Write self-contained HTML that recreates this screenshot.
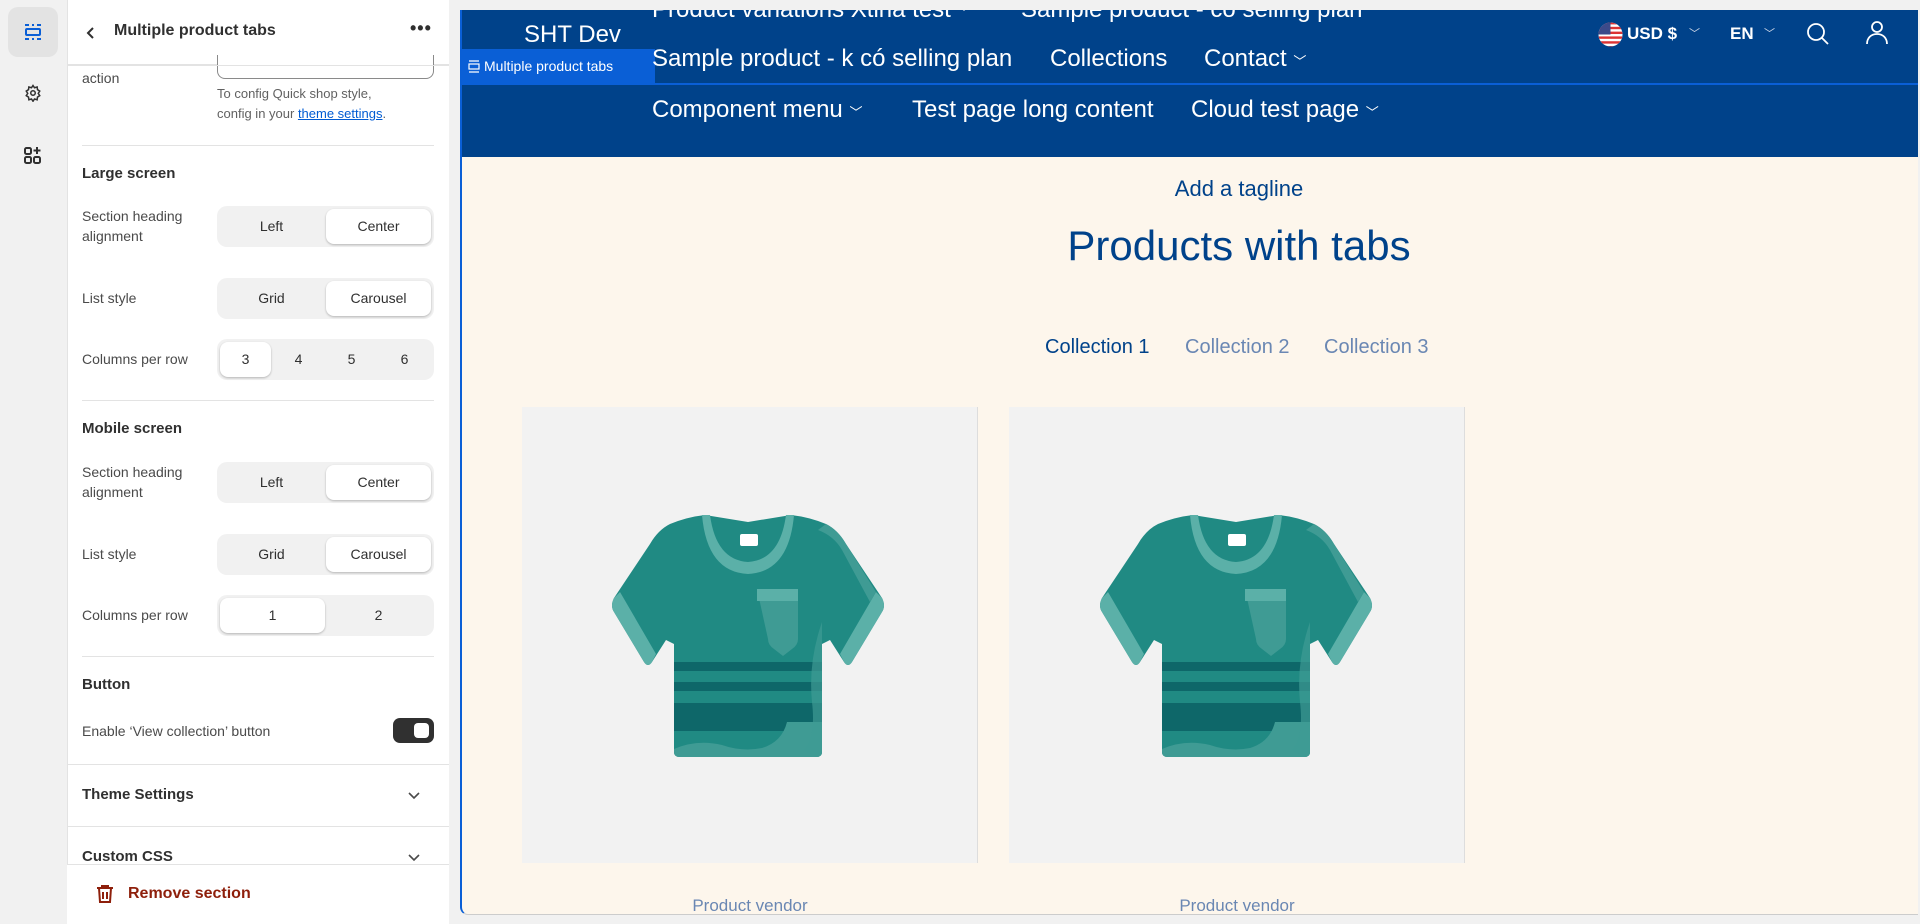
<!DOCTYPE html>
<html><head><meta charset="utf-8"><style>
*{box-sizing:border-box;margin:0;padding:0}
body{width:1920px;height:924px;background:#f1f1f1;font-family:"Liberation Sans",sans-serif;position:relative;overflow:hidden;color:#303030}
.a{position:absolute;white-space:nowrap}
.rail{position:absolute;left:0;top:0;width:67px;height:924px;background:#f1f1f1}
.panel{position:absolute;left:67px;top:0;width:382px;height:924px;background:#fff;border-left:1px solid #e3e3e3}
.lbl{font-size:14px;color:#4a4a4a;line-height:20px}
.h{font-size:15px;font-weight:bold;color:#303030}
.seg{position:absolute;left:217px;width:217px;height:41px;background:#f1f1f1;border-radius:10px}
.seg div{position:absolute;top:3px;height:35px;line-height:35px;text-align:center;font-size:14px;color:#303030}
.seg .on{background:#fff;border-radius:8px;box-shadow:0 1px 2px rgba(0,0,0,.25)}
.div{position:absolute;left:82px;width:352px;height:1px;background:#e3e3e3}
.nav{color:#fff;font-size:24px}
.card{position:absolute;top:407px;width:456px;height:456px;background:#f2f2f2;border-right:1px solid #ddd}
</style></head><body>
<div class="rail">
 <div class="a" style="left:8px;top:7px;width:50px;height:50px;background:#e3e3e3;border-radius:10px"></div>
 <svg class="a" style="left:24px;top:23px" width="18" height="18" viewBox="0 0 18 18" fill="none" stroke="#0a5fd6" stroke-width="2"><rect x="2" y="6" width="14" height="6" rx="1"/><path d="M2 3V2h3M8 2h2M13 2h3v1M2 15v1h3M8 16h2M13 16h3v-1"/></svg>
 <svg class="a" style="left:24px;top:84px" width="18" height="18" viewBox="0 0 24 24" fill="none" stroke="#303030" stroke-width="2"><circle cx="12" cy="12" r="3"/><path d="M12 2l2 3 3.5-1 .5 3.5 3 2-2 3 2 3-3 2-.5 3.5-3.5-1-2 3-2-3-3.5 1-.5-3.5-3-2 2-3-2-3 3-2 .5-3.5 3.5 1z"/></svg>
 <svg class="a" style="left:24px;top:146px" width="18" height="18" viewBox="0 0 18 18" fill="none" stroke="#303030" stroke-width="2"><rect x="1" y="2" width="6" height="6" rx="1.5"/><rect x="1" y="11" width="6" height="6" rx="1.5"/><rect x="10" y="11" width="6" height="6" rx="1.5"/><path d="M13 1v7M9.5 4.5h7"/></svg>
</div>
<div class="panel">
 <div class="a" style="left:0;top:0;width:381px;height:65px;border-bottom:1px solid #e3e3e3;background:#fff"></div>
 <svg class="a" style="left:17px;top:26px" width="12" height="14" viewBox="0 0 12 14" fill="none" stroke="#303030" stroke-width="2"><path d="M8 2L3 7l5 5"/></svg>
 <div class="a" style="left:46px;top:22px;font-size:16px;font-weight:bold;color:#303030">Multiple product tabs</div>
 <div class="a" style="left:342px;top:18px;font-size:18px;font-weight:bold;letter-spacing:1px">•••</div>
</div>
<div class="a" style="left:217px;top:55px;width:217px;height:24px;border:1px solid #8a8a8a;border-top:none;border-radius:0 0 8px 8px;background:#fff"></div>
<div class="a" style="left:67px;top:65px;width:382px;height:1px;background:#e3e3e3"></div>
<div class="a lbl" style="left:82px;top:68px">action</div>
<div class="a" style="left:217px;top:84px;font-size:13px;color:#616161;line-height:20px">To config Quick shop style,<br>config in your <span style="color:#005bd3;text-decoration:underline">theme settings</span>.</div>
<div class="div" style="top:145px"></div>
<div class="a h" style="left:82px;top:165px">Large screen</div>
<div class="a lbl" style="left:82px;top:206px">Section heading<br>alignment</div>
<div class="seg" style="top:206px"><div style="left:0;width:109px">Left</div><div class="on" style="left:109px;width:105px">Center</div></div>
<div class="a lbl" style="left:82px;top:288px">List style</div>
<div class="seg" style="top:278px"><div style="left:0;width:109px">Grid</div><div class="on" style="left:109px;width:105px">Carousel</div></div>
<div class="a lbl" style="left:82px;top:349px">Columns per row</div>
<div class="seg" style="top:339px"><div class="on" style="left:3px;width:51px">3</div><div style="left:56px;width:51px">4</div><div style="left:109px;width:51px">5</div><div style="left:162px;width:51px">6</div></div>
<div class="div" style="top:400px"></div>
<div class="a h" style="left:82px;top:420px">Mobile screen</div>
<div class="a lbl" style="left:82px;top:462px">Section heading<br>alignment</div>
<div class="seg" style="top:462px"><div style="left:0;width:109px">Left</div><div class="on" style="left:109px;width:105px">Center</div></div>
<div class="a lbl" style="left:82px;top:544px">List style</div>
<div class="seg" style="top:534px"><div style="left:0;width:109px">Grid</div><div class="on" style="left:109px;width:105px">Carousel</div></div>
<div class="a lbl" style="left:82px;top:605px">Columns per row</div>
<div class="seg" style="top:595px"><div class="on" style="left:3px;width:105px">1</div><div style="left:109px;width:105px">2</div></div>
<div class="div" style="top:656px"></div>
<div class="a h" style="left:82px;top:676px">Button</div>
<div class="a lbl" style="left:82px;top:721px">Enable ‘View collection’ button</div>
<div class="a" style="left:393px;top:718px;width:41px;height:25px;background:#303030;border-radius:7px"><div class="a" style="left:21px;top:5px;width:15px;height:15px;background:#fff;border-radius:4px"></div></div>
<div class="a" style="left:67px;top:764px;width:382px;height:1px;background:#e3e3e3"></div>
<div class="a h" style="left:82px;top:786px">Theme Settings</div>
<svg class="a" style="left:407px;top:791px" width="14" height="10" viewBox="0 0 14 10" fill="none" stroke="#4a4a4a" stroke-width="1.6"><path d="M2 2l5 5 5-5"/></svg>
<div class="a" style="left:67px;top:826px;width:382px;height:1px;background:#e3e3e3"></div>
<div class="a h" style="left:82px;top:848px">Custom CSS</div>
<svg class="a" style="left:407px;top:853px" width="14" height="10" viewBox="0 0 14 10" fill="none" stroke="#4a4a4a" stroke-width="1.6"><path d="M2 2l5 5 5-5"/></svg>
<div class="a" style="left:67px;top:864px;width:382px;height:60px;background:#fff;border-top:1px solid #e3e3e3"></div>
<svg class="a" style="left:96px;top:884px" width="18" height="20" viewBox="0 0 18 20" fill="none" stroke="#8e1f0b" stroke-width="2"><path d="M1 4h16M6 4V2h6v2M3 4l1 14h10l1-14M7 8v7M11 8v7"/></svg>
<div class="a" style="left:128px;top:885px;font-size:16px;font-weight:bold;color:#8e1f0b">Remove section</div>

<!-- preview -->
<div class="a" style="left:460px;top:10px;width:1458px;height:905px;background:#fdf6ec;border-left:2px solid #0a5fd6;border-bottom:1px solid #ccc;border-radius:0 0 0 8px;overflow:hidden">
 <div class="a" style="left:0;top:0;width:1458px;height:147px;background:#00428a"></div>
 <div class="a" style="left:0;top:73px;width:1458px;height:2px;background:#0a5fd6"></div>
 <div class="a" style="left:0;top:39px;width:193px;height:35px;background:#0a5fd6"></div>
 <svg class="a" style="left:6px;top:50px" width="12" height="13" viewBox="0 0 12 13" fill="none" stroke="#fff" stroke-width="1.2"><rect x="1" y="4" width="10" height="5"/><path d="M1 1h10M1 12h10"/></svg>
 <div class="a" style="left:22px;top:48px;font-size:14px;color:#fff">Multiple product tabs</div>
 <div class="a" style="left:62px;top:11px;font-size:24px;color:#fff">SHT Dev</div>
 <div class="a nav" style="left:190px;top:-14px">Product variations Xtina test <span style="font-size:13px">﹀</span></div>
 <div class="a nav" style="left:559px;top:-14px">Sample product - có selling plan</div>
 <div class="a nav" style="left:190px;top:35px">Sample product - k có selling plan</div>
 <div class="a nav" style="left:588px;top:35px">Collections</div>
 <div class="a nav" style="left:742px;top:35px">Contact <span style="font-size:13px">﹀</span></div>
 <div class="a nav" style="left:190px;top:86px">Component menu <span style="font-size:13px">﹀</span></div>
 <div class="a nav" style="left:450px;top:86px">Test page long content</div>
 <div class="a nav" style="left:729px;top:86px">Cloud test page <span style="font-size:13px">﹀</span></div>
 <svg class="a" style="left:1136px;top:12px" width="25" height="25" viewBox="0 0 26 26"><clipPath id="c"><circle cx="13" cy="13" r="12.5"/></clipPath><g clip-path="url(#c)"><rect width="26" height="26" fill="#fff"/><g fill="#d33"><rect y="0" width="26" height="2.5"/><rect y="5" width="26" height="2.5"/><rect y="10" width="26" height="2.5"/><rect y="15" width="26" height="2.5"/><rect y="20" width="26" height="2.5"/><rect y="25" width="26" height="2"/></g><rect width="13" height="13" fill="#3c4a8a"/></g></svg>
 <div class="a" style="left:1165px;top:14px;font-size:17px;font-weight:bold;color:#fff">USD $</div>
 <div class="a" style="left:1227px;top:15px;font-size:11px;color:#cfd8e8">﹀</div>
 <div class="a" style="left:1268px;top:14px;font-size:17px;font-weight:bold;color:#fff">EN</div>
 <div class="a" style="left:1302px;top:15px;font-size:11px;color:#cfd8e8">﹀</div>
 <svg class="a" style="left:1344px;top:12px" width="24" height="24" viewBox="0 0 24 24" fill="none" stroke="#fff" stroke-width="1.8"><circle cx="10" cy="10" r="8"/><path d="M16 16l6 6"/></svg>
 <svg class="a" style="left:1404px;top:11px" width="22" height="24" viewBox="0 0 22 24" fill="none" stroke="#fff" stroke-width="1.8"><circle cx="11" cy="6" r="5"/><path d="M1 23c0-6 4-10 10-10s10 4 10 10"/></svg>
 <div class="a" style="left:0;top:166px;width:1554px;text-align:center;font-size:22px;color:#00428a">Add a tagline</div>
 <div class="a" style="left:0;top:212px;width:1554px;text-align:center;font-size:42px;color:#00428a">Products with tabs</div>
 <div class="a" style="left:583px;top:326px;font-size:20px;color:#00428a">Collection 1</div>
 <div class="a" style="left:723px;top:326px;font-size:20px;color:#6a87b3">Collection 2</div>
 <div class="a" style="left:862px;top:326px;font-size:20px;color:#6a87b3">Collection 3</div>
</div>
<div class="card" style="left:522px"></div>
<div class="card" style="left:1009px"></div>
<svg width="0" height="0" style="position:absolute"><defs><g id="tee">
 <path d="M58 12 Q75 5 93 3 L136 10 L179 3 Q197 5 214 12 Q226 18 234 32 L270 86 Q274 94 270 100 L240 150 Q236 156 232 150 L218 128 L210 132 L210 240 Q210 245 204 245 L68 245 Q62 245 62 240 L62 132 L54 128 L40 150 Q36 156 32 150 L2 100 Q-2 94 2 86 L38 32 Q46 18 58 12 Z" fill="#208a83"/>
 <path d="M2 86 L8 80 L44 142 L40 150 Q36 156 32 150 L2 100 Q-2 94 2 86 Z M270 86 L264 80 L228 142 L232 150 Q236 156 240 150 L270 100 Q274 94 270 86 Z" fill="#5bb0a8"/>
 <path d="M214 12 Q226 18 234 32 L264 80 L258 90 L230 38 Q222 24 206 18 Z" fill="#3f9b94"/>
 <path d="M90 3 Q95 60 136 62 Q177 60 182 3 L174 3 Q168 48 136 50 Q104 48 98 3 Z" fill="#5bb0a8"/>
 <rect x="128" y="22" width="18" height="12" rx="2" fill="#fff"/>
 <path d="M145 77 h41 v50 q0 6 -6 10 l-9 7 l-9 -7 q-6 -4 -6 -10 z" fill="#3f9b94"/>
 <rect x="145" y="77" width="41" height="12" fill="#5bb0a8"/>
 <rect x="62" y="150" width="148" height="9" fill="#0e6769"/>
 <rect x="62" y="170" width="148" height="9" fill="#0e6769"/>
 <rect x="62" y="191" width="148" height="28" fill="#0e6769"/>
 <path d="M62 237 Q85 227 110 233 Q130 240 150 236 Q170 230 175 210 L210 210 L210 240 Q210 245 204 245 L68 245 Q62 245 62 240 Z" fill="#3f9b94"/>
 <path d="M210 110 Q196 150 200 190 Q204 225 192 238 L204 245 Q210 245 210 240 Z" fill="#3f9b94" opacity=".7"/>
</g></defs></svg>
<svg class="a" style="left:612px;top:512px" width="272" height="245" viewBox="0 0 272 245"><use href="#tee"/></svg>
<svg class="a" style="left:1100px;top:512px" width="272" height="245" viewBox="0 0 272 245"><use href="#tee"/></svg>
<div class="a" style="left:522px;top:896px;width:456px;text-align:center;font-size:17px;color:#6a87b3">Product vendor</div>
<div class="a" style="left:1009px;top:896px;width:456px;text-align:center;font-size:17px;color:#6a87b3">Product vendor</div>
</body></html>
